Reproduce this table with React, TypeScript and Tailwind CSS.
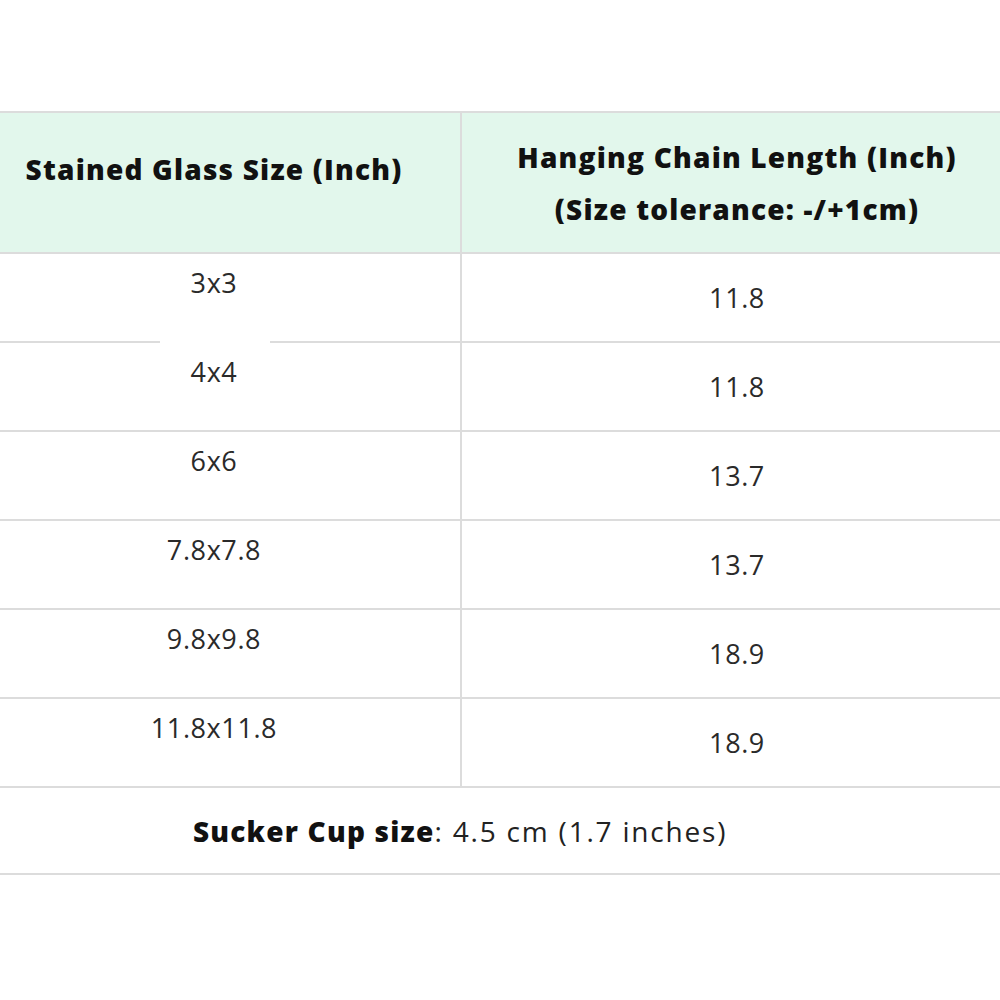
const rows: [string, string][] = [
  ["3x3", "11.8"],
  ["4x4", "11.8"],
  ["6x6", "13.7"],
  ["7.8x7.8", "13.7"],
  ["9.8x9.8", "18.9"],
  ["11.8x11.8", "18.9"],
];

export default function App() {
  return (
    <div
      className="w-[1000px] h-[1000px] overflow-hidden bg-white pt-[111px]"
      style={{ fontFamily: '"Open Sans", "Liberation Sans", sans-serif' }}
    >
      <div className="ml-[-32px] w-[1044px] border-t-2 border-[#dcdcdc]">
        <div className="grid grid-cols-[494px_550px] bg-[#e2f7ec] border-b-2 border-[#dcdcdc]">
          <div className="h-[139px] flex items-center justify-center pb-[28px] border-r-2 border-[#dcdcdc] text-[28px] font-extrabold text-[#111] tracking-[1.2px]">
            Stained Glass Size (Inch)
          </div>
          <div className="h-[139px] flex flex-col items-center justify-center pt-[1px] text-[28px] leading-[52px] font-extrabold text-[#111] tracking-[1.2px]">
            <span>Hanging Chain Length (Inch)</span>
            <span>(Size tolerance: -/+1cm)</span>
          </div>
        </div>
        {rows.map(([size, chain], i) => (
          <div
            key={i}
            className="relative grid grid-cols-[494px_550px] border-b-2 border-[#dcdcdc] text-[27px] text-[#2a2a2a] tracking-[0.6px]"
          >
            <div className="h-[87px] flex justify-center pt-[9px] border-r-2 border-[#dcdcdc]">
              {size}
            </div>
            <div className="h-[87px] flex items-center justify-center pt-[1px]">
              {chain}
            </div>
            {i === 0 && (
              <div className="absolute left-[192px] bottom-[-2px] w-[110px] h-[2px] bg-white" />
            )}
          </div>
        ))}
        <div className="h-[87px] flex items-center pl-[225px] border-b-2 border-[#dcdcdc] text-[28px] text-[#222] tracking-[1.8px]">
          <span className="font-extrabold text-[#111] tracking-[1.2px]">Sucker Cup size</span>
          <span>: 4.5 cm (1.7 inches)</span>
        </div>
      </div>
    </div>
  );
}
